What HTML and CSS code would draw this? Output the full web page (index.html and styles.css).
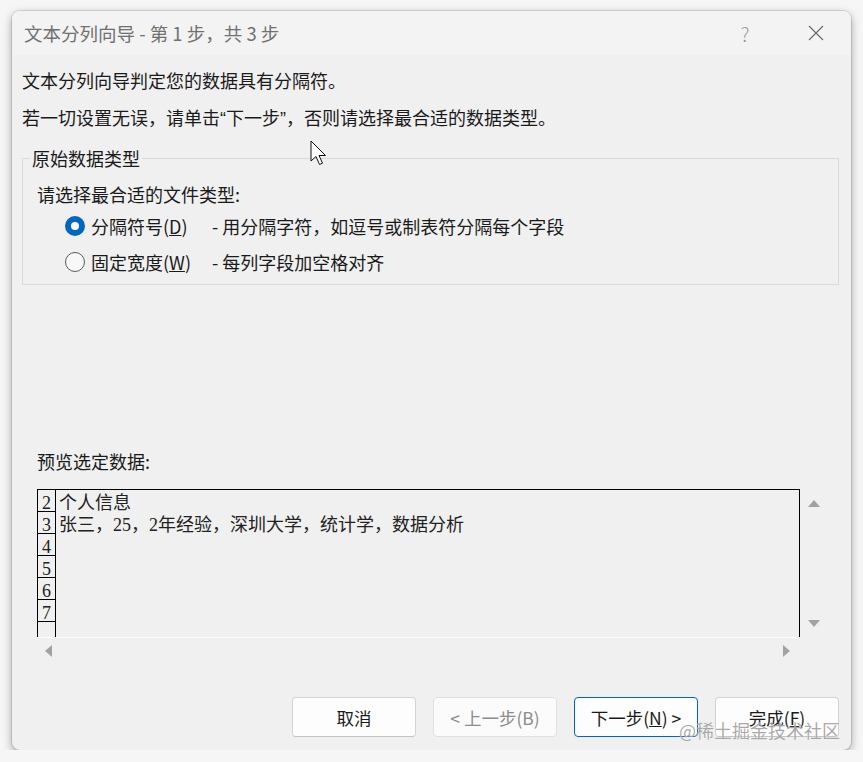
FILE: index.html
```html
<!DOCTYPE html>
<html lang="zh-CN">
<head>
    <meta charset="UTF-8">
    <meta name="viewport" content="width=device-width, initial-scale=1.0">
    <title>文本分列向导</title>
    <link rel="stylesheet" href="styles.css">
</head>
<body>
    <div class="dialog">
        <div class="titlebar">
            <span class="title">文本分列向导 - 第 1 步，共 3 步</span>
            <span class="help">?</span>
            <span class="close">
                <svg width="16" height="16" viewBox="0 0 16 16"><path d="M1 1L15 15M15 1L1 15" stroke="#666" stroke-width="1.1" fill="none"/></svg>
            </span>
        </div>
        <div class="content">
            <p class="intro">文本分列向导判定您的数据具有分隔符。</p>
            <p class="intro second">若一切设置无误，请单击<span class="q">“</span>下一步<span class="q">”</span>，否则请选择最合适的数据类型。</p>
            <fieldset class="group">
                <legend>原始数据类型</legend>
                <div class="group-label">请选择最合适的文件类型:</div>
                <div class="radio-row">
                    <span class="radio checked"></span>
                    <span class="radio-label">分隔符号(<u>D</u>)</span>
                    <span class="radio-desc">- 用分隔字符，如逗号或制表符分隔每个字段</span>
                </div>
                <div class="radio-row second">
                    <span class="radio"></span>
                    <span class="radio-label">固定宽度(<u>W</u>)</span>
                    <span class="radio-desc">- 每列字段加空格对齐</span>
                </div>
            </fieldset>
            <div class="preview-label">预览选定数据:</div>
            <div class="preview">
                <div class="preview-box">
                    <div class="row"><span class="num">2</span><span class="cell">个人信息</span></div>
                    <div class="row"><span class="num">3</span><span class="cell">张三，25，2年经验，深圳大学，统计学，数据分析</span></div>
                    <div class="row"><span class="num">4</span><span class="cell"></span></div>
                    <div class="row"><span class="num">5</span><span class="cell"></span></div>
                    <div class="row"><span class="num">6</span><span class="cell"></span></div>
                    <div class="row"><span class="num">7</span><span class="cell"></span></div>
                    <div class="row"><span class="num"></span><span class="cell"></span></div>
                </div>
                <div class="vscroll">
                    <span class="arrow up"></span>
                    <span class="arrow down"></span>
                </div>
                <div class="hscroll">
                    <span class="arrow left"></span>
                    <span class="arrow right"></span>
                </div>
            </div>
        </div>
        <div class="buttons">
            <button class="btn">取消</button>
            <button class="btn disabled">&lt; 上一步(B)</button>
            <button class="btn primary">下一步(<u>N</u>) &gt;</button>
            <button class="btn">完成(<u>F</u>)</button>
        </div>
        <div class="watermark">@稀土掘金技术社区</div>
        <svg class="cursor" width="20" height="28" viewBox="0 0 20 28">
            <path d="M1 1 L1 21 L6 16.5 L9.5 24.5 L12.5 23.2 L9 15.5 L15.5 15.5 Z" fill="#fff" stroke="#111" stroke-width="1" stroke-linejoin="round"/>
        </svg>
    </div>
</body>
</html>
```

FILE: styles.css
```css
body {
    margin: 0;
    background: #f6f6f6;
    font-family: "Noto Sans CJK SC", sans-serif;
    color: #1a1a1a;
}
.dialog {
    position: relative;
    margin: 11px 0 0 12px;
    width: 839px;
    height: 739px;
    background: #f0f0f0;
    border-radius: 8px;
    box-shadow: 0 0 0 1px rgba(0, 0, 0, 0.1), 0 3px 10px rgba(0, 0, 0, 0.35);
    display: flex;
    flex-direction: column;
    overflow: hidden;
}
.titlebar {
    height: 44px;
    display: flex;
    align-items: center;
    padding: 0 12px;
    background: #f3f3f3;
    font-size: 18.5px;
    color: #707070;
}
.help {
    margin-left: auto;
    width: 24px;
    text-align: center;
    color: #9a9a9a;
    font-size: 20px;
    font-weight: 300;
}
.close {
    width: 46px;
    margin-left: 36px;
    display: flex;
    justify-content: center;
}
.content {
    padding: 12px 12px 0 10px;
}
.intro {
    margin: 0;
    font-size: 18px;
    line-height: 26px;
}
.intro.second {
    margin-top: 11px;
}
.q {
    font-family: "Liberation Sans", sans-serif;
}
.group {
    margin: 14px 0 0;
    padding: 12px 14px 10px;
    border: 1px solid #d9d9d9;
    min-width: 0;
}
.group legend {
    margin-left: -7px;
    padding: 0 2px;
    font-size: 18px;
    line-height: 24px;
}
.group-label {
    font-size: 18px;
    line-height: 24px;
}
.radio-row {
    display: flex;
    align-items: center;
    height: 24px;
    margin-top: 8px;
    padding-left: 28px;
    font-size: 18px;
}
.radio-row.second {
    margin-top: 12px;
}
.radio {
    width: 20px;
    height: 20px;
    box-sizing: border-box;
    border-radius: 50%;
    border: 1px solid #5a5a5a;
    background: #f8f8f8;
    margin-right: 6px;
}
.radio.checked {
    border: 6px solid #0067c0;
    background: #fff;
}
.radio-label {
    width: 121px;
}
.preview-label {
    margin-top: 164px;
    padding-left: 15px;
    font-size: 18px;
    line-height: 24px;
}
.preview {
    display: grid;
    grid-template-columns: 763px 28px;
    grid-template-rows: 148px 26px;
    margin: 16px 0 0 15px;
}
.preview-box {
    border: 1px solid #000;
    border-bottom: none;
    overflow: hidden;
    font-family: "Liberation Serif", "Noto Sans CJK SC", serif;
    font-size: 18px;
    color: #222;
}
.row {
    display: flex;
    height: 22px;
}
.num {
    width: 18px;
    flex: none;
    box-sizing: border-box;
    border-right: 1px solid #000;
    border-bottom: 1px solid #000;
    text-align: center;
    line-height: 27px;
    overflow: hidden;
}
.cell {
    padding-left: 3px;
    line-height: 26px;
    white-space: nowrap;
}
.vscroll {
    display: flex;
    flex-direction: column;
    justify-content: space-between;
    align-items: center;
    padding: 11px 0 10px;
}
.hscroll {
    display: flex;
    justify-content: space-between;
    align-items: center;
    padding: 0 10px 0 8px;
    border-top: 1px solid #fbfbfb;
}
.arrow {
    width: 0;
    height: 0;
}
.arrow.up {
    border-left: 6px solid transparent;
    border-right: 6px solid transparent;
    border-bottom: 7px solid #a2a2a2;
}
.arrow.down {
    border-left: 6px solid transparent;
    border-right: 6px solid transparent;
    border-top: 7px solid #a2a2a2;
}
.arrow.left {
    border-top: 6px solid transparent;
    border-bottom: 6px solid transparent;
    border-right: 7px solid #a2a2a2;
}
.arrow.right {
    border-top: 6px solid transparent;
    border-bottom: 6px solid transparent;
    border-left: 7px solid #a2a2a2;
}
.buttons {
    margin-top: auto;
    display: flex;
    justify-content: flex-end;
    gap: 17px;
    padding: 0 12px 13px 0;
}
.btn {
    width: 124px;
    height: 40px;
    background: #fdfdfd;
    border: 1px solid #d3d3d3;
    border-bottom-color: #c4c4c4;
    border-radius: 4px;
    font-family: "Noto Sans CJK SC", sans-serif;
    font-size: 17.5px;
    color: #1a1a1a;
    padding: 0;
}
.btn.disabled {
    color: #8c8c8c;
    background: #fbfbfb;
    border-color: #e0e0e0;
}
.btn.primary {
    border-color: #0067c0;
}
.watermark {
    position: absolute;
    right: 11px;
    top: 707px;
    font-size: 18px;
    line-height: 24px;
    color: rgba(110, 110, 110, 0.6);
    text-shadow: 0 0 1px #fff;
}
.cursor {
    position: absolute;
    left: 298px;
    top: 129px;
}
```
